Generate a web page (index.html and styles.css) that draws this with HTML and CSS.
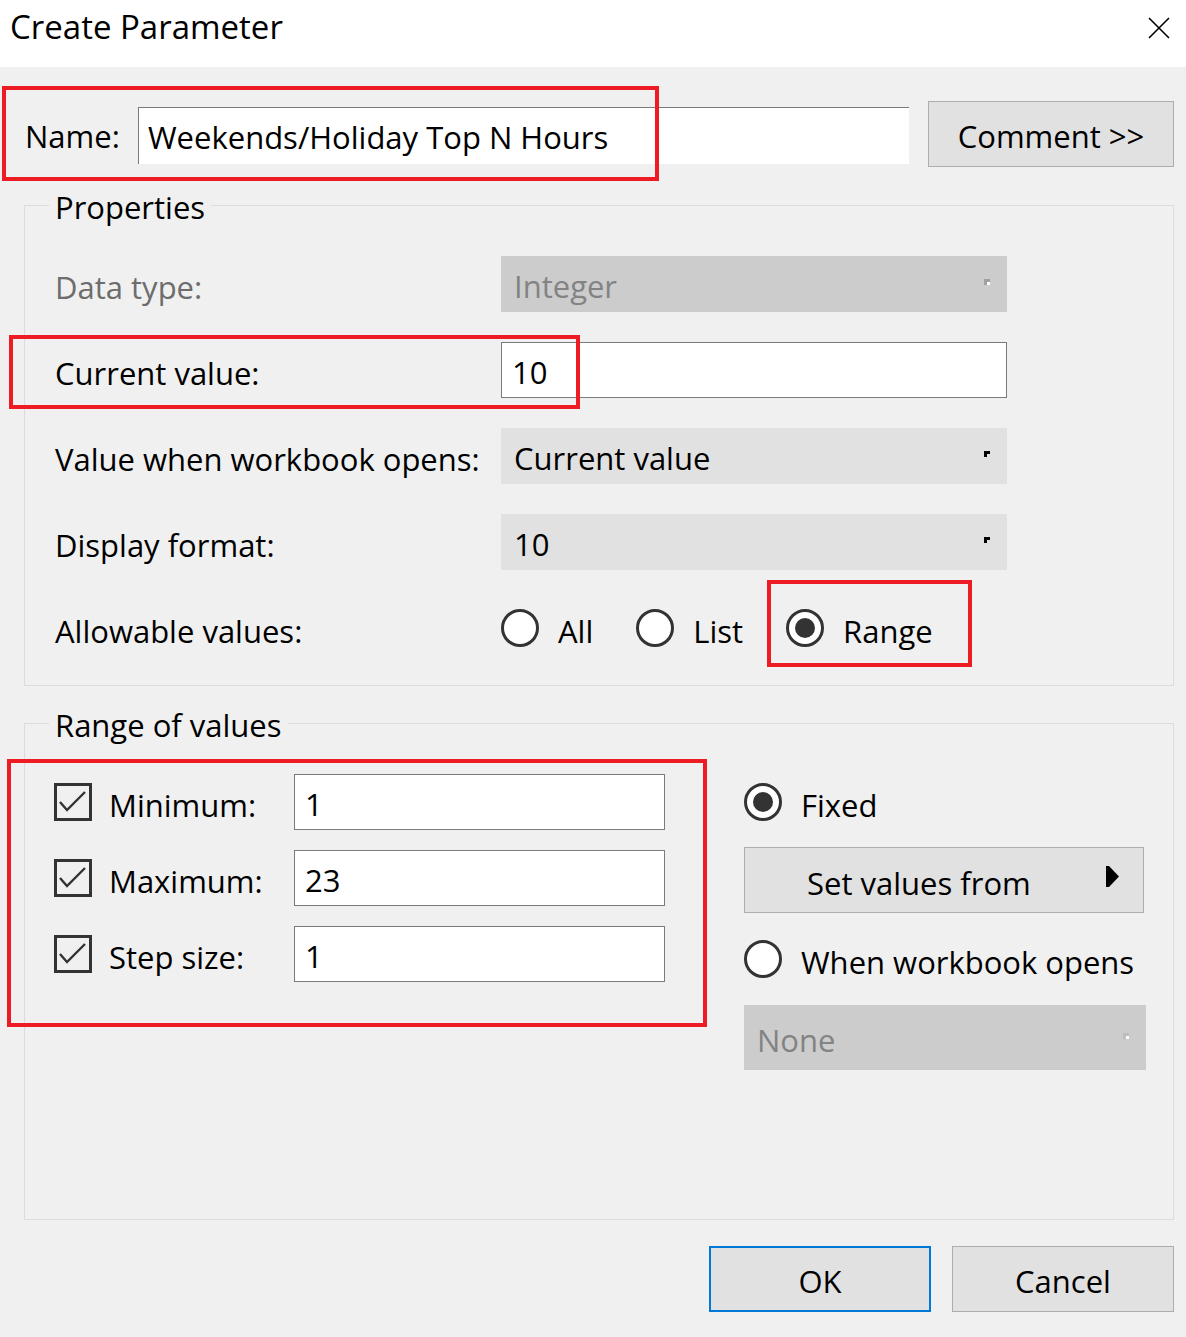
FILE: index.html
```html
<!DOCTYPE html>
<html lang="en">
<head>
<meta charset="utf-8">
<title>Create Parameter</title>
<link rel="stylesheet" href="styles.css">
</head>
<body>
<div class="dialog">
  <header class="titlebar">
    <span class="title">Create Parameter</span>
    <svg class="close" width="22" height="22" viewBox="0 0 22 22"><path d="M1 1L21 21M21 1L1 21" stroke="#000" stroke-width="1.6" fill="none"/></svg>
  </header>
  <main class="content">
    <div class="name-row">
      <span class="name-label">Name:</span>
      <div class="textbox name-input">Weekends/Holiday Top N Hours</div>
      <button class="btn comment-btn">Comment &gt;&gt;</button>
    </div>

    <fieldset class="group props">
      <legend>Properties</legend>
      <div class="prop-grid">
        <span class="lbl lbl-disabled">Data type:</span>
        <div class="combo combo-disabled"><span>Integer</span><svg class="arrow" width="6" height="6" viewBox="0 0 6 6"><path d="M0 0H6V3H3V6H0Z" fill="#a0a0a0"/><rect x="3" y="3" width="3" height="3" fill="#fff"/></svg></div>

        <span class="lbl">Current value:</span>
        <div class="textbox field">10</div>

        <span class="lbl">Value when workbook opens:</span>
        <div class="combo"><span>Current value</span><svg class="arrow" width="6" height="6" viewBox="0 0 6 6"><path d="M0 0H6V3H3V6H0Z" fill="#000"/></svg></div>

        <span class="lbl">Display format:</span>
        <div class="combo"><span>10</span><svg class="arrow" width="6" height="6" viewBox="0 0 6 6"><path d="M0 0H6V3H3V6H0Z" fill="#000"/></svg></div>

        <span class="lbl">Allowable values:</span>
        <div class="radio-row">
          <span class="radio-opt"><span class="radio"></span><span class="t">All</span></span>
          <span class="radio-opt"><span class="radio"></span><span class="t">List</span></span>
          <span class="radio-opt"><span class="radio checked"></span><span class="t">Range</span></span>
        </div>
      </div>
    </fieldset>

    <fieldset class="group range">
      <legend>Range of values</legend>
      <div class="range-body">
        <div class="range-grid">
          <span class="check"><svg width="32" height="32" viewBox="0 0 32 32"><path d="M3 16L10 24L28 6" stroke="#333" stroke-width="2.4" fill="none"/></svg></span>
          <span class="lbl">Minimum:</span>
          <div class="textbox field">1</div>

          <span class="check"><svg width="32" height="32" viewBox="0 0 32 32"><path d="M3 16L10 24L28 6" stroke="#333" stroke-width="2.4" fill="none"/></svg></span>
          <span class="lbl">Maximum:</span>
          <div class="textbox field">23</div>

          <span class="check"><svg width="32" height="32" viewBox="0 0 32 32"><path d="M3 16L10 24L28 6" stroke="#333" stroke-width="2.4" fill="none"/></svg></span>
          <span class="lbl">Step size:</span>
          <div class="textbox field">1</div>
        </div>
        <div class="range-right">
          <span class="radio-opt opt-row"><span class="radio checked"></span><span class="t">Fixed</span></span>
          <button class="btn setvals"><span class="t">Set values from</span><svg class="tri" width="13" height="21" viewBox="0 0 13 21"><path d="M0 0H3L13 10.5L3 21H0Z" fill="#000"/></svg></button>
          <span class="radio-opt opt-row"><span class="radio"></span><span class="t">When workbook opens</span></span>
          <div class="combo combo-disabled none"><span>None</span><svg class="arrow" width="6" height="6" viewBox="0 0 6 6"><rect width="6" height="6" fill="#fff"/><path d="M0 0H6V3H3V6H0Z" fill="#bdbdbd"/></svg></div>
        </div>
      </div>
    </fieldset>

    <div class="footer">
      <button class="btn ok">OK</button>
      <button class="btn">Cancel</button>
    </div>
  </main>

  <div class="annot a-name"></div>
  <div class="annot a-current"></div>
  <div class="annot a-range"></div>
  <div class="annot a-fields"></div>
</div>
</body>
</html>
```

FILE: styles.css
```css
* { box-sizing: border-box; }
html, body { margin: 0; padding: 0; }
body {
  background: #f0f0f0;
  font-family: "Open Sans", "Noto Sans", "Liberation Sans", sans-serif;
  font-size: 31px;
  color: #000;
}
.dialog {
  position: relative;
  width: 1186px;
  height: 1337px;
  background: #f0f0f0;
  overflow: hidden;
}
.titlebar {
  height: 67px;
  background: #fff;
  display: flex;
  align-items: center;
  justify-content: space-between;
  padding: 0 16px 14px 10px;
}
.title { font-size: 33px; line-height: 40px; }
.close { display: block; margin-top: 2px; }

.content { padding: 0 12px 0 24px; }

.name-row {
  display: flex;
  align-items: center;
  margin-top: 34px;
  height: 66px;
}
.name-label { width: 114px; padding-left: 1px; line-height: 40px; padding-top: 3px; }
.textbox {
  background: #fff;
  border: 1px solid #7a7a7a;
  height: 57px;
  display: flex;
  align-items: center;
  padding-left: 10px;
  padding-top: 3px;
  line-height: 40px;
}
.name-input {
  width: 771px;
  border-right: none;
  border-bottom: none;
  padding-left: 9px;
  margin-top: 2px;
}
.btn {
  font: inherit;
  color: #000;
  background: #e1e1e1;
  border: 1px solid #adadad;
  height: 66px;
  padding: 3px 0 0;
  line-height: 40px;
}
.comment-btn { width: 246px; margin-left: 19px; }

.group {
  margin: 0;
  min-width: 0;
  border: 1px solid #dcdcdc;
  padding: 29px 10px 29px 24px;
}
.group legend {
  padding: 4px 6px 0;
  line-height: 40px;
}
.props { margin-top: 16px; }
.range { margin-top: 15px; padding-bottom: 149px; }

.prop-grid {
  display: grid;
  grid-template-columns: 446px 506px;
  grid-template-rows: repeat(5, 56px);
  row-gap: 30px;
  align-items: center;
  padding-left: 6px;
}
.lbl { line-height: 40px; padding-top: 5px; }
.lbl-disabled { color: #6d6d6d; }
.field { height: 56px; padding-left: 10px; }
.combo {
  height: 56px;
  background: #e1e1e1;
  display: flex;
  align-items: center;
  justify-content: space-between;
  padding: 4px 17px 0 13px;
  line-height: 40px;
}
.combo .arrow { display: block; margin-top: -8px; }
.combo-disabled { background: #cccccc; color: #838383; }

.radio-row { display: flex; align-items: center; gap: 43px; }
.radio-opt { display: inline-flex; align-items: center; gap: 19px; line-height: 40px; }
.radio-opt .t { padding-top: 5px; }
.radio {
  width: 38px;
  height: 38px;
  border: 3px solid #333;
  border-radius: 50%;
  background: #fff;
  display: inline-flex;
  align-items: center;
  justify-content: center;
  flex: none;
}
.radio.checked::after {
  content: "";
  width: 20px;
  height: 20px;
  border-radius: 50%;
  background: #333;
}

.range-body { display: flex; align-items: flex-start; padding-left: 5px; }
.range-grid {
  display: grid;
  grid-template-columns: 38px 168px 371px;
  column-gap: 17px;
  grid-template-rows: repeat(3, 56px);
  row-gap: 20px;
  align-items: center;
  width: 611px;
}
.check {
  width: 38px;
  height: 38px;
  border: 3px solid #333;
  background: #f0f0f0;
  display: flex;
  align-items: center;
  justify-content: center;
}
.check svg { display: block; }
.range-right {
  margin-left: 79px;
  width: 401px;
  display: flex;
  flex-direction: column;
  gap: 18px;
}
.opt-row { height: 56px; }
.setvals {
  width: 400px;
  height: 66px;
  display: flex;
  align-items: center;
  justify-content: space-between;
  padding: 0 24px 0 62px;
  margin-top: -1px;
}
.setvals .t { padding-top: 5px; }
.setvals .tri { display: block; margin-top: -8px; }
.none { height: 65px; width: 402px; }

.footer {
  display: flex;
  justify-content: flex-end;
  gap: 21px;
  margin-top: 26px;
}
.footer .btn { width: 222px; }
.footer .ok { border: 2px solid #0078d7; }

.annot {
  position: absolute;
  border: 4px solid #ed1c24;
  pointer-events: none;
}
.a-name { left: 2px; top: 86px; width: 657px; height: 95px; }
.a-current { left: 9px; top: 335px; width: 571px; height: 74px; }
.a-range { left: 767px; top: 580px; width: 205px; height: 87px; }
.a-fields { left: 7px; top: 759px; width: 700px; height: 268px; }
```
